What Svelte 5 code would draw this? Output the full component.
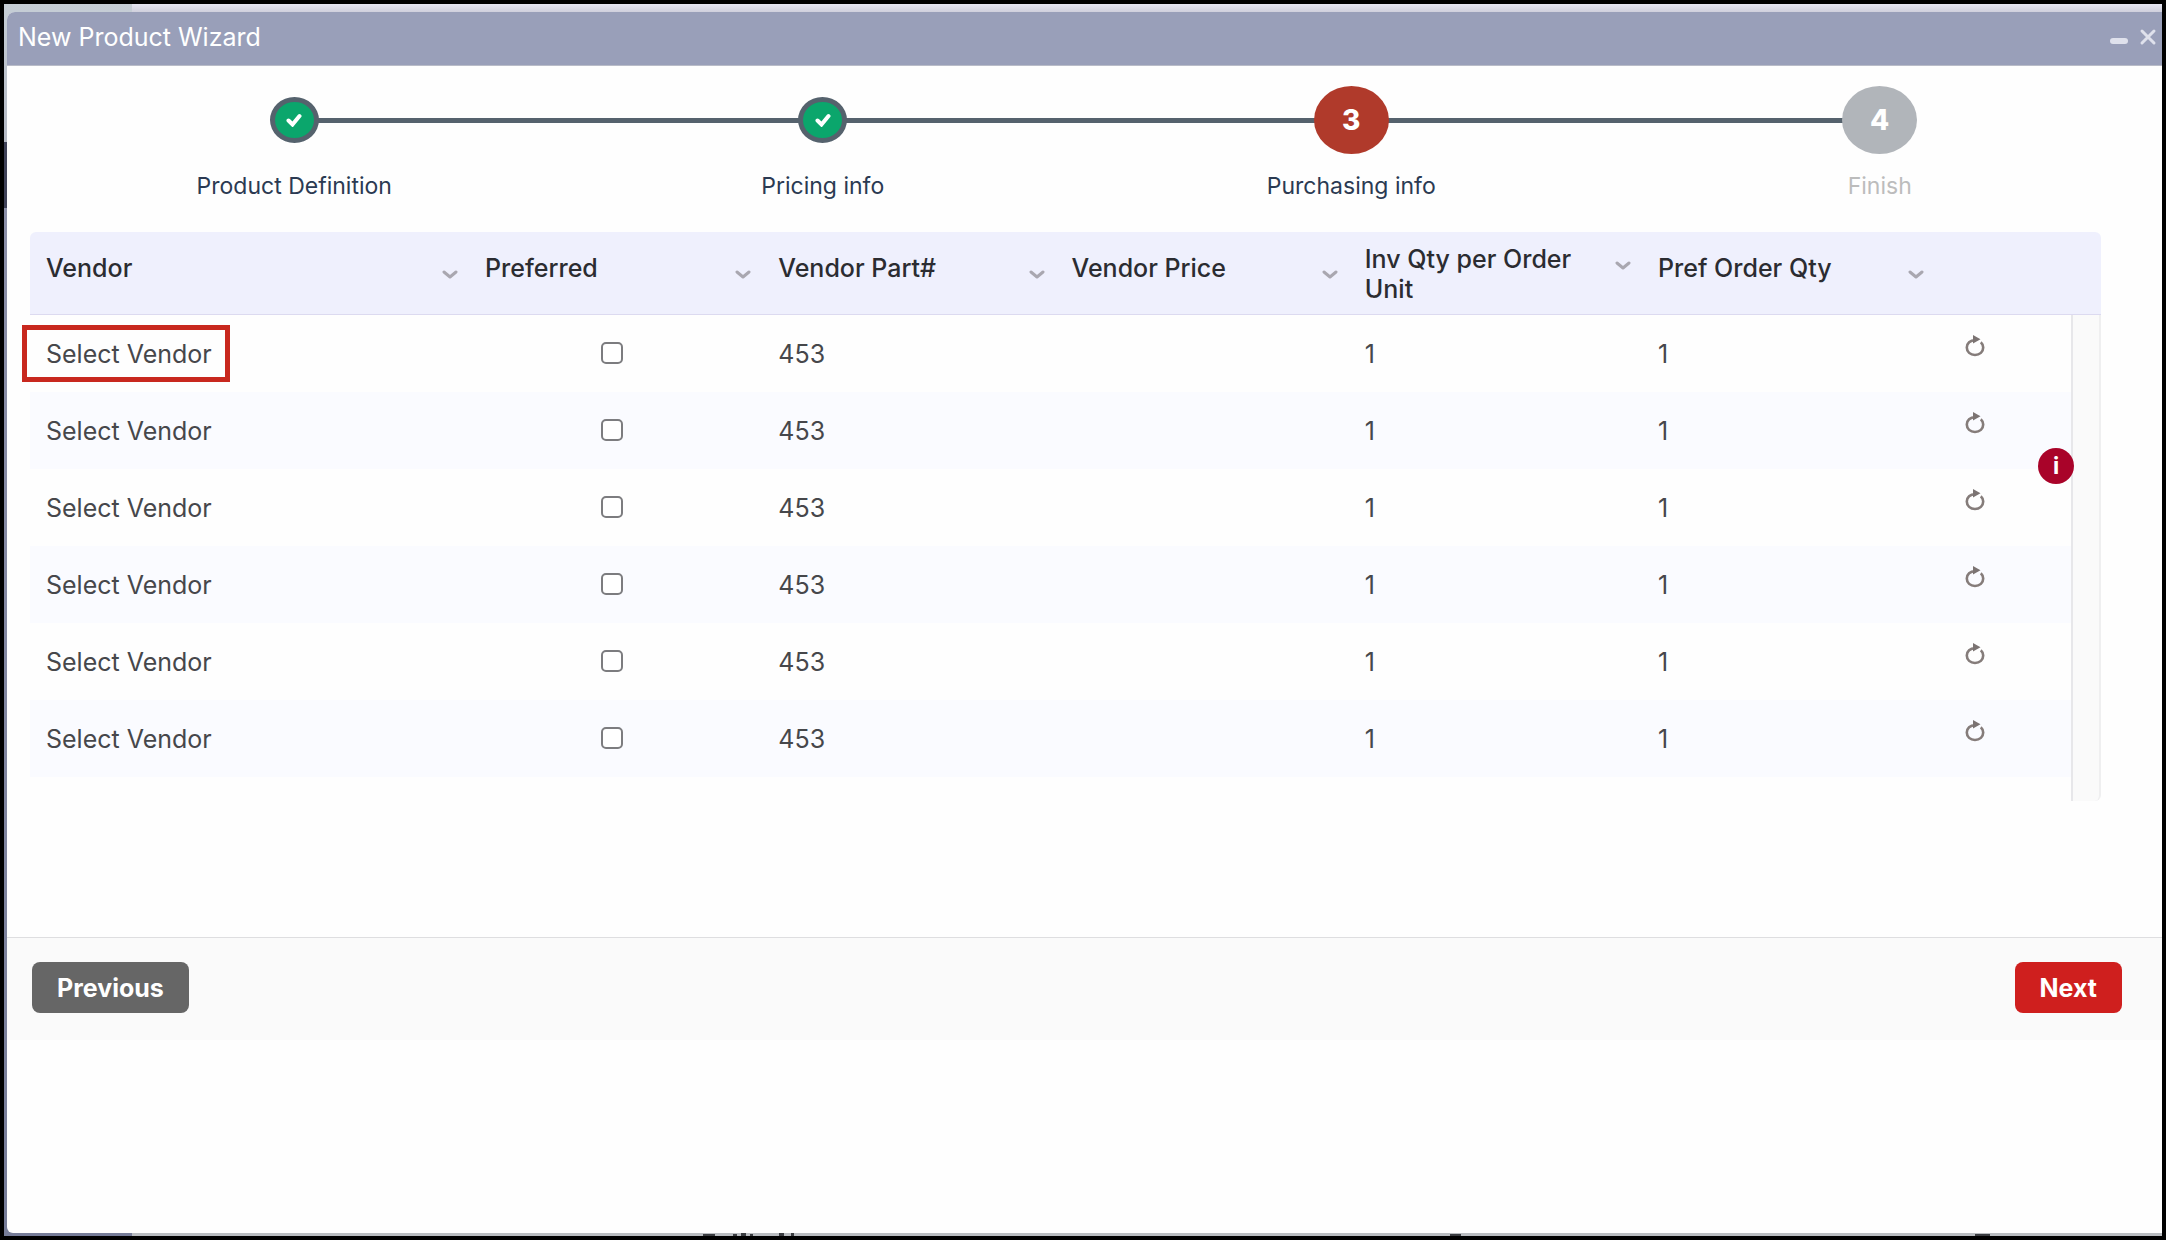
<script lang="ts">
  interface Step {
    label: string;
    state: 'done' | 'current' | 'pending';
  }

  interface VendorRow {
    vendor: string;
    preferred: boolean;
    part: string;
    price: string;
    invQty: number;
    orderQty: number;
  }

  const steps: Step[] = [
    { label: 'Product Definition', state: 'done' },
    { label: 'Pricing info', state: 'done' },
    { label: 'Purchasing info', state: 'current' },
    { label: 'Finish', state: 'pending' }
  ];

  const columns = [
    { name: 'Vendor', tall: false },
    { name: 'Preferred', tall: false },
    { name: 'Vendor Part#', tall: false },
    { name: 'Vendor Price', tall: false },
    { name: 'Inv Qty per Order Unit', tall: true },
    { name: 'Pref Order Qty', tall: false }
  ];

  function emptyRow(): VendorRow {
    return { vendor: 'Select Vendor', preferred: false, part: '453', price: '', invQty: 1, orderQty: 1 };
  }

  let rows = $state<VendorRow[]>(Array.from({ length: 6 }, emptyRow));
  let selected = $state(0);
</script>

<div class="screen">
  <div class="page-sidebar"></div>
  <svg class="page-text" width="100%" height="3" aria-hidden="true">
    <path d="M699 1h12v2h-12zM729 1h4v2h-4zM737 0h5v3h-5zM746 1h3v2h-3zM775 0h5v3h-5zM787 0h3v3h-3zM1446 1h11v2h-11zM1971 1h15v2h-15z" fill="#3a3c40" />
  </svg>

  <section class="window">
    <header class="titlebar">
      <h1>New Product Wizard</h1>
      <div class="window-controls">
        <button type="button" aria-label="Minimize">
          <svg width="20" height="20" viewBox="0 0 20 20"><rect x="1" y="11" width="18" height="6" rx="3" fill="currentColor" /></svg>
        </button>
        <button type="button" aria-label="Close">
          <svg width="20" height="20" viewBox="0 0 20 20"><path d="M4 4l12 12M16 4L4 16" fill="none" stroke="currentColor" stroke-width="3" stroke-linecap="round" /></svg>
        </button>
      </div>
    </header>

    <div class="content">
      <ol class="steps">
        {#each steps as step, i}
          <li class="step {step.state}">
            <div class="marker">
              <span class="circle">
                {#if step.state === 'done'}
                  <svg width="16" height="14" viewBox="0 0 16 14"><path d="M2.5 7.5l4 4 7-8.5" fill="none" stroke="#fff" stroke-width="4" stroke-linecap="round" /></svg>
                {:else}
                  {i + 1}
                {/if}
              </span>
            </div>
            <span class="step-label">{step.label}</span>
          </li>
        {/each}
      </ol>

      <div class="grid">
        <table>
          <colgroup>
            <col class="col-vendor" />
            <col class="col" />
            <col class="col" />
            <col class="col" />
            <col class="col" />
            <col class="col" />
            <col />
            <col class="col-gutter" />
          </colgroup>
          <thead>
            <tr>
              {#each columns as column}
                <th class:tall={column.tall}>
                  <div class="head">
                    <span>{column.name}</span>
                    <svg width="16" height="10" viewBox="0 0 16 10"><path d="M2 2l6 5 6-5" fill="none" stroke="#a9a7b0" stroke-width="3" stroke-linecap="round" stroke-linejoin="round" /></svg>
                  </div>
                </th>
              {/each}
              <th></th>
              <th></th>
            </tr>
          </thead>
          <tbody>
            {#each rows as row, i}
              <tr>
                <td>
                  <button type="button" class="vendor" class:selected={selected === i} onclick={() => (selected = i)}>
                    {row.vendor}
                  </button>
                </td>
                <td class="check">
                  <input type="checkbox" aria-label="Preferred" bind:checked={row.preferred} />
                </td>
                <td>{row.part}</td>
                <td>{row.price}</td>
                <td>{row.invQty}</td>
                <td>{row.orderQty}</td>
                <td class="action">
                  <button type="button" class="reset" aria-label="Reset row" onclick={() => (rows[i] = emptyRow())}>
                    <svg width="20" height="22" viewBox="0 0 20 22">
                      <path d="M10 5.2C5.2 5.2 1.8 8.4 1.8 12.6S5.2 20 10 20s8.2-3.2 8.2-7.4c0-2.2-.8-4-2.4-5.4" fill="none" stroke="#857c7a" stroke-width="2.6" />
                      <path d="M8 0l7.5 4.2L8 8.4z" fill="#7b7372" />
                    </svg>
                  </button>
                </td>
                {#if i === 0}
                  <td class="gutter" rowspan={rows.length + 1}></td>
                {/if}
              </tr>
            {/each}
            <tr class="filler"><td colspan="7"></td></tr>
          </tbody>
        </table>
        <button type="button" class="info" aria-label="Information">i</button>
      </div>
    </div>

    <footer>
      <button type="button" class="btn previous">Previous</button>
      <button type="button" class="btn next">Next</button>
    </footer>
  </section>
</div>

<style>
  :global(body) {
    font-family: Inter, "Liberation Sans", sans-serif;
  }

  .screen {
    position: relative;
    display: flex;
    box-sizing: border-box;
    min-height: 100vh;
    padding: 8px 0 3px 3px;
    border: 4px solid #000;
    background: linear-gradient(#e6e6f2, #cfcfdc 8px, #b9bcc0 9px);
    color: #46474b;
    font-size: 25px;
    line-height: 30px;
  }

  .page-sidebar {
    position: absolute;
    top: 0;
    bottom: 0;
    left: 0;
    width: 128px;
    background: linear-gradient(#c6ced6, #b4b9c4 138px, #3f4258 138px, #3f4258 204px, #8b8fa8 204px, #767c98);
  }

  .page-text {
    position: absolute;
    bottom: 0;
    left: 0;
  }

  .window {
    position: relative;
    flex: 1;
    overflow: hidden;
    border-radius: 8px 0 0 6px;
    background: #fefefe;
  }

  button {
    border: 0;
    padding: 0;
    background: none;
    color: inherit;
    font: inherit;
    cursor: pointer;
  }

  svg {
    display: block;
  }

  .titlebar {
    display: flex;
    align-items: center;
    justify-content: space-between;
    box-sizing: border-box;
    height: 54px;
    padding: 0 4px 3px 11px;
    border-bottom: 1px solid #b9bcc8;
    background: #999fb9;
  }

  h1 {
    margin: 0;
    color: #fff;
    font-size: 25px;
    font-weight: 400;
  }

  .window-controls {
    display: flex;
    gap: 9px;
    color: #dfe1ec;
  }

  .content {
    padding: 20px 61px 136px 23px;
  }

  .steps {
    display: flex;
    margin: 0 -43px 31px 0;
    padding: 0;
    list-style: none;
  }

  .step {
    flex: 1;
    display: flex;
    flex-direction: column;
    align-items: center;
    gap: 17px;
    color: #2b3a52;
    font-size: 23px;
  }

  .marker {
    position: relative;
    display: flex;
    align-items: center;
    justify-content: center;
    width: 100%;
    height: 68px;
  }

  /* connector to the following step */
  .step:not(:last-child) .marker::after {
    content: "";
    position: absolute;
    left: 50%;
    width: 100%;
    height: 5px;
    background: #55626d;
  }

  .circle {
    position: relative;
    z-index: 1;
    display: flex;
    align-items: center;
    justify-content: center;
    box-sizing: border-box;
    width: 75px;
    height: 68px;
    border-radius: 50%;
    background: #b1b5ba;
    color: #fff;
    font-size: 28px;
    font-weight: 800;
  }

  .current .circle {
    background: #b03a2b;
  }

  .done .circle {
    width: 49px;
    height: 46px;
    border: 5px solid #55626d;
    background: #0ba66c;
  }

  .pending {
    color: #bcbcbc;
  }

  .grid {
    position: relative;
  }

  table {
    width: 100%;
    table-layout: fixed;
    border-collapse: separate;
    border-spacing: 0;
  }

  .col-vendor {
    width: 21.2%;
  }

  .col {
    width: 14.16%;
  }

  .col-gutter {
    width: 30px;
  }

  th {
    padding: 21px 11px 10px 16px;
    border-bottom: 1px solid #dcdaf0;
    background: #eff0fd;
    color: #2b2c31;
    font-weight: 500;
    text-align: left;
    vertical-align: top;
  }

  th.tall {
    padding-top: 12px;
  }

  th:first-child {
    border-top-left-radius: 6px;
  }

  th:last-child {
    border-top-right-radius: 6px;
  }

  .head {
    display: flex;
    align-items: flex-start;
    justify-content: space-between;
    gap: 20px;
  }

  .head svg {
    flex: none;
    margin-top: 17px;
  }

  td {
    height: 77px;
    padding: 0 24px 0 16px;
  }

  tbody tr:nth-child(even) td {
    background: #fafbff;
  }

  .vendor {
    position: relative;
    white-space: nowrap;
  }

  .vendor.selected::after {
    content: "";
    position: absolute;
    inset: -14px -18px -13px -24px;
    border: 5px solid #c8281e;
  }

  .check {
    box-sizing: border-box;
    padding-bottom: 6px;
    text-align: center;
  }

  input {
    appearance: none;
    display: inline-block;
    box-sizing: border-box;
    width: 22px;
    height: 22px;
    margin: 0;
    border: 2px solid #7c7c7f;
    border-radius: 5px;
    background: #fff;
    vertical-align: middle;
  }

  input:checked {
    background: #b03a2b;
  }

  .action {
    padding: 18px 0 0 30px;
    box-sizing: border-box;
    vertical-align: top;
  }

  tbody .gutter {
    padding: 0;
    border-left: 2px solid #e7e7ea;
    border-right: 2px solid #efeff0;
    border-bottom-right-radius: 6px;
    background: #fafafa;
  }

  tbody .filler td {
    height: 24px;
    background: none;
  }

  .info {
    position: absolute;
    top: 216px;
    right: 27px;
    width: 36px;
    height: 36px;
    border-radius: 50%;
    background: #a90329;
    color: #fff;
    font-size: 23px;
    font-weight: 700;
  }

  footer {
    display: flex;
    align-items: flex-start;
    justify-content: space-between;
    padding: 24px 40px 27px 25px;
    border-top: 1px solid #dedee0;
    background: #fafafa;
  }

  .btn {
    height: 51px;
    padding: 0 25px;
    border-radius: 8px;
    color: #fff;
    font-weight: 700;
  }

  .previous {
    background: #666;
  }

  .next {
    background: #cf1f1e;
  }
</style>
